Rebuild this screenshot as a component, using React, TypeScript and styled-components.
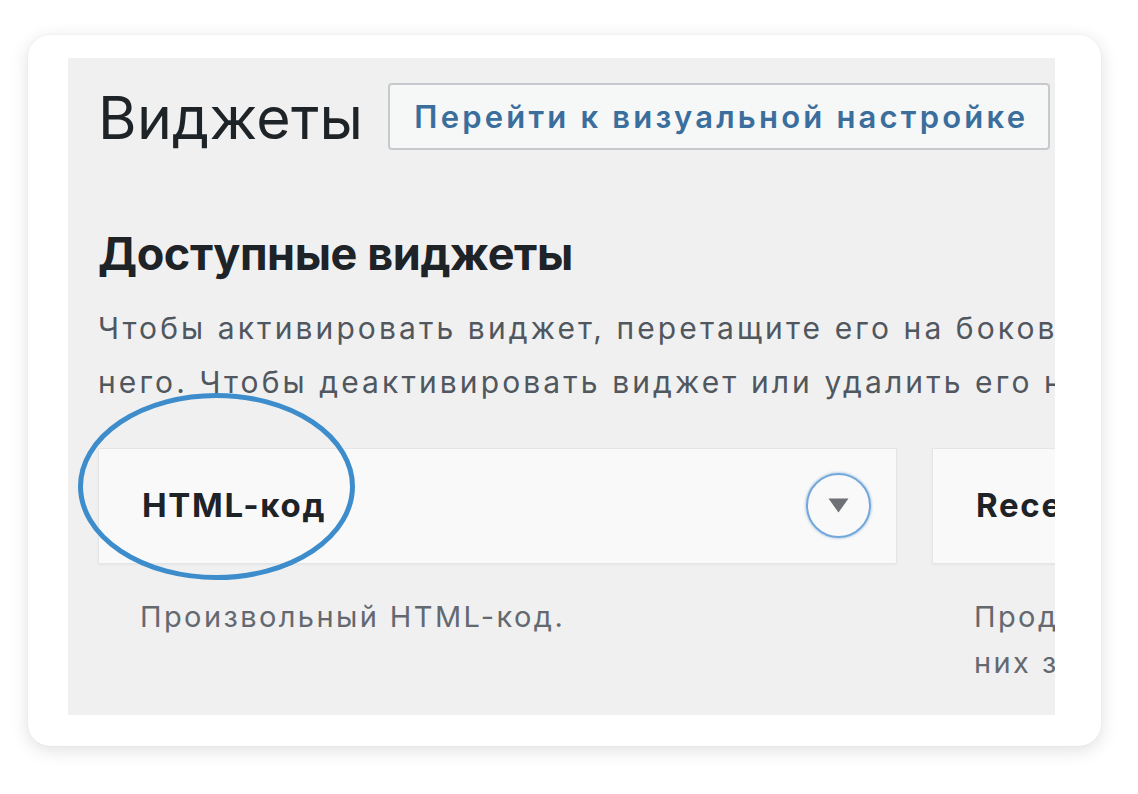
import React from "react";
import styled, { createGlobalStyle } from "styled-components";

const Global = createGlobalStyle`
  html, body { margin: 0; padding: 0; background: #ffffff; }
  body { font-family: Inter, Roboto, "Noto Sans", "Liberation Sans", sans-serif; }
`;

const Page = styled.div`
  width: 1138px;
  height: 794px;
  padding: 35px 37px 48px 28px;
  box-sizing: border-box;
`;

const Frame = styled.div`
  width: 1073px;
  height: 711px;
  background: #ffffff;
  border-radius: 22px;
  box-shadow: 0 4px 18px rgba(0, 0, 0, 0.13), 0 0 2px rgba(0, 0, 0, 0.06);
  padding: 23px 46px 31px 40px;
  box-sizing: border-box;
`;

const Screen = styled.div`
  width: 100%;
  height: 100%;
  background: #f0f0f1;
  overflow: hidden;
  position: relative;
  padding: 25px 0 0 30px;
  box-sizing: border-box;
`;

const Header = styled.div`
  display: flex;
  align-items: center;
  gap: 25px;
  white-space: nowrap;
`;

const Title = styled.h1`
  margin: 0;
  padding-top: 3px;
  font-size: 59px;
  font-weight: 400;
  letter-spacing: 0.3px;
  color: #1d2327;
  line-height: 64px;
`;

const LinkButton = styled.div`
  display: flex;
  align-items: center;
  height: 67px;
  padding: 0 20px 0 24px;
  box-sizing: border-box;
  border: 2px solid #c8c9cc;
  border-radius: 4px;
  background: #f6f7f7;
  color: #3a6e9c;
  font-size: 31px;
  font-weight: 600;
  letter-spacing: 3.2px;
`;

const Heading = styled.h2`
  margin: 81px 0 0 0;
  font-size: 45px;
  font-weight: 700;
  color: #1d2327;
  line-height: 45px;
  letter-spacing: -0.4px;
  white-space: nowrap;
`;

const Description = styled.p`
  margin: 25px 0 0 0;
  font-size: 30px;
  line-height: 54px;
  letter-spacing: 3.1px;
  color: #50575e;
  white-space: nowrap;
`;

const Widgets = styled.div`
  display: flex;
  gap: 35px;
  margin-top: 39px;
`;

const WidgetCol = styled.div<{ $w: number }>`
  flex: 0 0 ${(p) => p.$w}px;
  display: flex;
  flex-direction: column;
`;

const WidgetCard = styled.div`
  height: 116px;
  background: #f9f9f9;
  border: 1px solid #e4e5e7;
  box-shadow: 0 1px 2px rgba(0, 0, 0, 0.05);
  display: flex;
  align-items: center;
  justify-content: space-between;
  padding: 0 25px 0 43px;
  box-sizing: border-box;
`;

const WidgetName = styled.span`
  font-size: 33px;
  font-weight: 700;
  letter-spacing: 1.7px;
  color: #1d2327;
  white-space: nowrap;
  margin-top: -2px;
`;

const Toggle = styled.div`
  width: 65px;
  height: 65px;
  border-radius: 50%;
  border: 2px solid #72a7dc;
  box-shadow: 0 0 3px rgba(34, 113, 177, 0.55);
  box-sizing: border-box;
  display: flex;
  align-items: center;
  justify-content: center;
  margin-top: -2px;
`;

const WidgetDesc = styled.div`
  margin-top: 30px;
  padding-left: 42px;
  font-size: 29px;
  line-height: 46px;
  letter-spacing: 2.4px;
  color: #646970;
  white-space: nowrap;
`;

const Ellipse = styled.svg`
  position: absolute;
  left: 10px;
  top: 335px;
  overflow: visible;
  pointer-events: none;
`;

export default function App() {
  return (
    <>
      <Global />
      <Page>
        <Frame>
          <Screen>
            <Header>
              <Title>Виджеты</Title>
              <LinkButton>Перейти к визуальной настройке</LinkButton>
            </Header>
            <Heading>Доступные виджеты</Heading>
            <Description>
              Чтобы активировать виджет, перетащите его на боковую колонку или щёлкните на нём.
              <br />
              него. Чтобы деактивировать виджет или удалить его настройки, перетащите его обратно.
            </Description>
            <Widgets>
              <WidgetCol $w={799}>
                <WidgetCard>
                  <WidgetName>HTML-код</WidgetName>
                  <Toggle>
                    <svg width="21" height="15" viewBox="0 0 21 15">
                      <path d="M0.5 0.5 L20.5 0.5 L10.5 14.5 Z" fill="#6d7075" />
                    </svg>
                  </Toggle>
                </WidgetCard>
                <WidgetDesc>Произвольный HTML-код.</WidgetDesc>
              </WidgetCol>
              <WidgetCol $w={799}>
                <WidgetCard>
                  <WidgetName>Recent Comments</WidgetName>
                </WidgetCard>
                <WidgetDesc>
                  Продвинутый виджет последних
                  <br />
                  них записей.
                </WidgetDesc>
              </WidgetCol>
            </Widgets>
            <Ellipse width="277" height="187" viewBox="0 0 277 187">
              <ellipse cx="138.5" cy="93.5" rx="136" ry="91" fill="none" stroke="#3d8dcc" strokeWidth="5" />
            </Ellipse>
          </Screen>
        </Frame>
      </Page>
    </>
  );
}
